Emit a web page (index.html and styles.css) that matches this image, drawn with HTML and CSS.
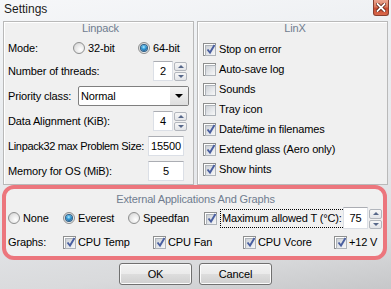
FILE: index.html
```html
<!DOCTYPE html>
<html lang="en">
<head>
  <meta charset="UTF-8" />
  <title>Settings</title>
  <link rel="stylesheet" href="styles.css">
</head>
<body>
  <div class="window">
    <div class="titlebar">
      <span class="title">Settings</span>
      <span class="close">
        <svg width="10" height="9" viewBox="0 0 10 9"><path d="M1.5 1 L8.5 8 M8.5 1 L1.5 8" stroke="#5a1e12" stroke-width="3.4" stroke-linecap="square"/><path d="M1.5 1 L8.5 8 M8.5 1 L1.5 8" stroke="#fff" stroke-width="1.8" stroke-linecap="square"/></svg>
      </span>
    </div>

    <div class="panels">
      <section class="group linpack">
        <div class="group-title">Linpack</div>
        <div class="mode-row">
          <span>Mode:</span>
          <span class="opt"><span class="radio"></span>32-bit</span>
          <span class="opt"><span class="radio on"></span>64-bit</span>
        </div>
        <div class="fields">
          <div class="field">
            <span>Number of threads:</span>
            <span class="spin">
              <span class="box small">2</span>
              <span class="spin-btns"><span class="up"></span><span class="down"></span></span>
            </span>
          </div>
          <div class="field">
            <span>Priority class:</span>
            <span class="select"><span class="select-text">Normal</span><span class="select-arrow"></span></span>
          </div>
          <div class="field">
            <span>Data Alignment (KiB):</span>
            <span class="spin">
              <span class="box small">4</span>
              <span class="spin-btns"><span class="up"></span><span class="down"></span></span>
            </span>
          </div>
          <div class="field">
            <span class="tight">Linpack32 max Problem Size:</span>
            <span class="box wide">15500</span>
          </div>
          <div class="field">
            <span>Memory for OS (MiB):</span>
            <span class="box wide">5</span>
          </div>
        </div>
      </section>

      <section class="group linx">
        <div class="group-title">LinX</div>
        <div class="checks">
          <div class="opt"><span class="check on"></span>Stop on error</div>
          <div class="opt"><span class="check"></span>Auto-save log</div>
          <div class="opt"><span class="check"></span>Sounds</div>
          <div class="opt"><span class="check"></span>Tray icon</div>
          <div class="opt"><span class="check on"></span>Date/time in filenames</div>
          <div class="opt"><span class="check on"></span>Extend glass (Aero only)</div>
          <div class="opt"><span class="check on"></span>Show hints</div>
        </div>
      </section>
    </div>

    <section class="external">
      <div class="group-title">External Applications And Graphs</div>
      <div class="ext-row apps">
        <span class="opt"><span class="radio"></span>None</span>
        <span class="opt"><span class="radio on"></span>Everest</span>
        <span class="opt"><span class="radio"></span>Speedfan</span>
        <span class="opt"><span class="check on"></span><span class="focus">Maximum allowed T (°C):</span></span>
        <span class="spin">
          <span class="box temp">75</span>
          <span class="spin-btns"><span class="up"></span><span class="down"></span></span>
        </span>
      </div>
      <div class="ext-row graphs">
        <span>Graphs:</span>
        <span class="opt"><span class="check on"></span>CPU Temp</span>
        <span class="opt"><span class="check on"></span>CPU Fan</span>
        <span class="opt"><span class="check on"></span>CPU Vcore</span>
        <span class="opt"><span class="check on"></span>+12 V</span>
      </div>
    </section>

    <div class="buttons">
      <span class="btn">OK</span>
      <span class="btn">Cancel</span>
    </div>
  </div>
</body>
</html>
```

FILE: styles.css
```css
* {
  box-sizing: border-box;
}
body {
  margin: 0;
  font-family: "Liberation Sans", Arial, sans-serif;
  font-size: 11px;
  letter-spacing: -0.15px;
  color: #000;
}
.window {
  width: 391px;
  height: 289px;
  overflow: hidden;
  display: flex;
  flex-direction: column;
  background: linear-gradient(172deg, #f6f7f9 0%, #e9ecef 35%, #e6e8eb 62%, #d9dadc 86%, #c6c7c9 100%);
}
.titlebar {
  height: 21px;
  display: flex;
  justify-content: space-between;
  align-items: flex-start;
  padding: 0 2px 0 4px;
}
.title {
  font-size: 12px;
  letter-spacing: 0;
  line-height: 14px;
  padding-top: 2px;
  color: #1a1a1a;
  text-shadow: 0 0 5px #fff;
}
.close {
  width: 16px;
  height: 16px;
  display: flex;
  align-items: center;
  justify-content: center;
  border: 1px solid #8a3f2f;
  border-top: none;
  border-radius: 0 0 3px 3px;
  background: linear-gradient(#eba590 0%, #dc7a5e 45%, #c84a30 55%, #d9694c 100%);
}

/* group boxes */
.panels {
  display: flex;
  gap: 3px;
  padding-left: 3px;
  height: 164px;
}
.group {
  width: 191px;
  background: #f0f0f0;
  border: 1px solid #b9b9b9;
  box-shadow: inset 1px 1px 0 #fff;
}
.linpack {
  padding-left: 4px;
}
.linx {
  padding-left: 5px;
}
.group-title {
  height: 13px;
  line-height: 13px;
  text-align: center;
  color: #6f7c8f;
}
.mode-row {
  height: 26px;
  display: grid;
  grid-template-columns: 65px 65px auto;
  align-items: center;
}
.fields {
  display: flex;
  flex-direction: column;
  gap: 5px;
}
.field {
  height: 20px;
  display: flex;
  justify-content: space-between;
  align-items: center;
  white-space: nowrap;
}
.tight {
  letter-spacing: -0.35px;
}
.opt {
  display: flex;
  align-items: center;
  white-space: nowrap;
}

/* radio and check */
.radio {
  width: 12px;
  height: 12px;
  margin-right: 3px;
  border-radius: 50%;
  border: 1px solid #8e8f8f;
  background: radial-gradient(circle at 65% 65%, #ffffff 0%, #e6e6e6 55%, #c9c9c9 100%);
  display: flex;
  align-items: center;
  justify-content: center;
}
.radio.on::after {
  content: "";
  width: 6px;
  height: 6px;
  border-radius: 50%;
  background: radial-gradient(circle at 45% 35%, #b8ecff 0%, #3ea6e0 35%, #0d4f8a 85%);
  box-shadow: 0 0 0 1px #2f5f86;
}
.check {
  width: 13px;
  height: 13px;
  margin-right: 2px;
  border: 1px solid #8e8f8f;
  background: #fff;
  padding: 1px;
  position: relative;
}
.check::before {
  content: "";
  display: block;
  width: 9px;
  height: 9px;
  border: 1px solid #aeb3b9;
  background: linear-gradient(135deg, #cdd1d6 0%, #e7e9ec 60%, #f7f7f7 100%);
}
.check.on::after {
  content: "";
  position: absolute;
  left: 1px;
  top: -1px;
  width: 12px;
  height: 12px;
  background: url("data:image/svg+xml,%3Csvg xmlns='http://www.w3.org/2000/svg' width='12' height='12'%3E%3Cpath d='M2.5 6.5 L5 9.5 L9.5 2' fill='none' stroke='%234a5fa0' stroke-width='1.9'/%3E%3C/svg%3E") no-repeat;
}
.checks {
  padding-top: 4px;
}
.checks .opt {
  height: 20px;
}
.checks .check {
  margin-right: 3px;
}

/* edit fields */
.box {
  height: 20px;
  display: flex;
  align-items: center;
  justify-content: center;
  background: #fff;
  border: 1px solid #dbdfe6;
  border-top-color: #abadb3;
}
.small {
  width: 20px;
}
.wide {
  width: 36px;
  margin-right: 9px;
}
.temp {
  width: 25px;
  height: 22px;
}
.spin {
  display: flex;
  gap: 1px;
  margin-right: 6px;
}
.spin-btns {
  width: 13px;
  display: flex;
  flex-direction: column;
  gap: 1px;
  padding-top: 1px;
}
.spin-btns span {
  flex: 1;
  border: 1px solid #b2b6bd;
  border-radius: 2px;
  background: linear-gradient(#f7f7f7, #e2e4e8);
  display: flex;
  align-items: center;
  justify-content: center;
}
.spin-btns .up::after,
.spin-btns .down::after {
  content: "";
  border-left: 3px solid transparent;
  border-right: 3px solid transparent;
}
.spin-btns .up::after {
  border-bottom: 3px solid #566789;
}
.spin-btns .down::after {
  border-top: 3px solid #566789;
}
.select {
  width: 111px;
  height: 20px;
  margin-right: 4px;
  display: flex;
  background: #fff;
  border: 1px solid #7f7f7f;
  border-radius: 2px;
}
.select-text {
  flex: 1;
  padding-left: 2px;
  line-height: 18px;
}
.select-arrow {
  width: 18px;
  background: linear-gradient(#f4f4f4, #dedede);
  display: flex;
  align-items: center;
  justify-content: center;
}
.select-arrow::after {
  content: "";
  border-left: 4px solid transparent;
  border-right: 4px solid transparent;
  border-top: 4px solid #000;
}

/* external apps */
.external {
  width: 385px;
  height: 75px;
  margin-left: 2px;
  padding: 3px 0 2px 2px;
  background: #f0f0f0;
  border: 4px solid #ec767d;
  border-radius: 12px;
}
.external .group-title {
  height: 14px;
  line-height: 14px;
}
.ext-row {
  height: 24px;
  display: grid;
  align-items: center;
  white-space: nowrap;
}
.apps {
  grid-template-columns: 55px 65px 76px 139px auto;
}
.graphs {
  grid-template-columns: 55px 90px 90px 91px auto;
}
.focus {
  margin-left: 1px;
  padding: 2px 2px 2px 1px;
  line-height: 13px;
  border: 1px dotted #000;
}
.apps .spin {
  margin-right: 0;
}
.apps .spin-btns {
  padding-top: 2px;
}

/* buttons */
.buttons {
  display: flex;
  justify-content: center;
  gap: 7px;
  margin-top: 3px;
}
.btn {
  width: 73px;
  height: 22px;
  display: flex;
  align-items: center;
  justify-content: center;
  border: 1px solid #707070;
  border-radius: 3px;
  background: linear-gradient(#f2f2f2 0%, #ebebeb 48%, #dddddd 52%, #cfcfcf 100%);
  box-shadow: inset 0 0 0 1px #fbfbfb;
}
```
